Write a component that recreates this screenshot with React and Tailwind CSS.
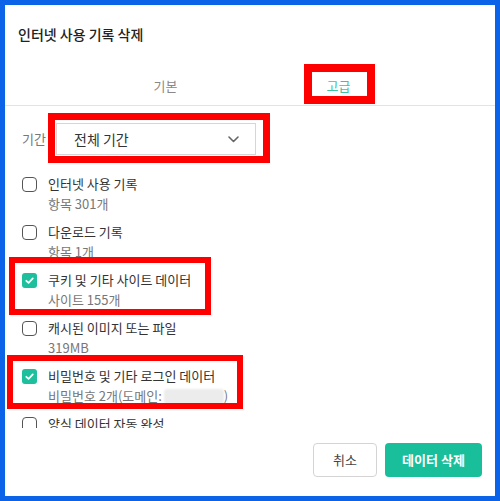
import React from "react";

const items = [
  { label: "인터넷 사용 기록", sub: "항목 301개", checked: false },
  { label: "다운로드 기록", sub: "항목 1개", checked: false },
  { label: "쿠키 및 기타 사이트 데이터", sub: "사이트 155개", checked: true },
  { label: "캐시된 이미지 또는 파일", sub: "319MB", checked: false },
  { label: "비밀번호 및 기타 로그인 데이터", sub: "password", checked: true },
  { label: "양식 데이터 자동 완성", sub: "", checked: false },
];

const Checkbox = ({ checked }) =>
  checked ? (
    <span className="flex h-[15px] w-[15px] shrink-0 items-center justify-center rounded-[3px] bg-[#1dbf9c]">
      <svg width="11" height="11" viewBox="0 0 12 12" fill="none">
        <polyline
          points="2.5,6.3 5,8.6 9.6,3.6"
          stroke="#fff"
          strokeWidth="1.9"
          strokeLinecap="round"
          strokeLinejoin="round"
        />
      </svg>
    </span>
  ) : (
    <span className="h-[15px] w-[15px] shrink-0 rounded-[4px] border-[1.5px] border-[#555]"></span>
  );

// red annotation boxes drawn over the dialog
const Mark = ({ className }) => (
  <div className={"pointer-events-none absolute border-[#ff0000] " + className}></div>
);

export default function App() {
  return (
    <div
      className="h-[501px] w-[500px] bg-[#0b63e8] p-[5px]"
      style={{ fontFamily: '"Noto Sans CJK KR", "Noto Sans", sans-serif' }}
    >
      <div className="relative flex h-[491px] w-[490px] flex-col bg-white">
        {/* Title */}
        <div className="pl-[13px] pt-[18px] text-[14px] font-medium leading-[22px] text-[#222]">
          인터넷 사용 기록 삭제
        </div>

        {/* Tabs */}
        <div className="mt-[21px] box-border flex h-[40px] border-b border-[#e3e3e3] pl-[74px]">
          <div className="flex w-[173px] items-center justify-center text-[13px] text-[#888]">
            기본
          </div>
          <div className="flex w-[173px] items-center justify-center text-[13px] text-[#3fc2a1]">
            고급
          </div>
        </div>

        {/* Content */}
        <div className="h-[322px] overflow-hidden pl-[17px]">
          <div className="mt-[17px] flex h-[32px] items-center">
            <span className="w-[34px] text-[13px] text-[#777]">기간</span>
            <div className="flex h-[32px] w-[200px] items-center justify-between border border-[#d6d6d6] pl-[17px] pr-[16px] text-[14px] text-[#333]">
              <span>전체 기간</span>
              <svg width="11" height="7" viewBox="0 0 11 7" fill="none">
                <polyline
                  points="1,1 5.5,5.5 10,1"
                  stroke="#666"
                  strokeWidth="1.6"
                  strokeLinecap="round"
                  strokeLinejoin="round"
                />
              </svg>
            </div>
          </div>

          <div className="mt-[19px] flex flex-col">
            {items.map((item) => (
              <div key={item.label} className="flex h-[48px] flex-col">
                <div className="flex h-[20px] items-center gap-[11px]">
                  <Checkbox checked={item.checked} />
                  <span className="text-[13px] text-[#333]">{item.label}</span>
                </div>
                <div className="flex h-[20px] items-center pl-[26px] text-[13px] text-[#777]">
                  {item.sub === "password" ? (
                    <>
                      <span>비밀번호 2개(도메인:</span>
                      <span className="ml-[2px] h-[15px] w-[60px] rounded-[3px] bg-[#ececec] blur-[1px]"></span>
                      <span>)</span>
                    </>
                  ) : (
                    item.sub
                  )}
                </div>
              </div>
            ))}
          </div>
        </div>

        {/* Footer */}
        <div className="flex justify-end gap-[8px] pr-[13px] pt-[15px]">
          <button className="h-[34px] w-[64px] rounded-[4px] border border-[#d4d4d4] bg-white text-[13px] text-[#444]">
            취소
          </button>
          <button className="h-[34px] w-[97px] rounded-[4px] bg-[#19bf9b] text-[13px] font-bold text-white">
            데이터 삭제
          </button>
        </div>

        <Mark className="left-[299px] top-[59px] h-[40px] w-[71px] border-[8px]" />
        <Mark className="left-[43px] top-[108px] h-[50px] w-[222px] border-[7px]" />
        <Mark className="left-[4px] top-[252px] h-[58px] w-[202px] border-[6px]" />
        <Mark className="left-[2px] top-[350px] h-[54px] w-[236px] border-[6px]" />
      </div>
    </div>
  );
}
